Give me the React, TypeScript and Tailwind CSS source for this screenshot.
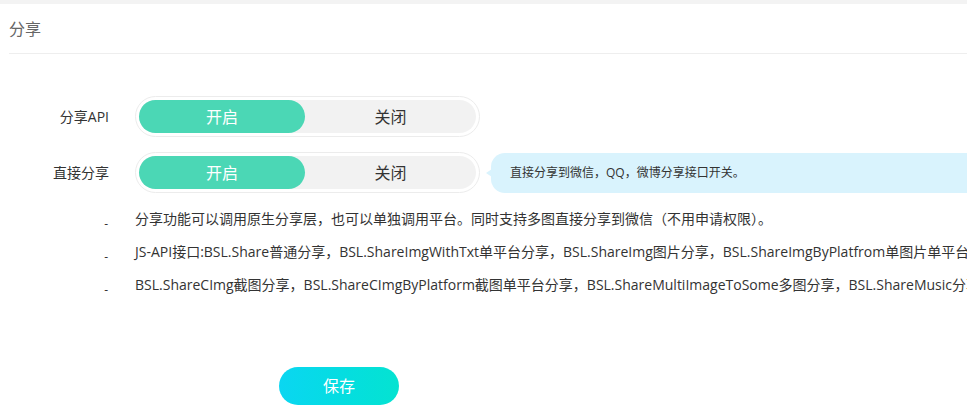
import React from "react";

const font = "font-['Open_Sans','Noto_Sans_CJK_SC',sans-serif]";

function Toggle() {
  return (
    <div className="w-[345px] h-[41px] rounded-full border border-[#ececec] bg-white p-[3px]">
      <div className="flex h-full w-full rounded-full bg-[#f2f2f2]">
        <div className="flex h-full w-[166px] items-center justify-center rounded-full bg-[#4bd7b5] text-[16px] text-white">
          开启
        </div>
        <div className="flex h-full flex-1 items-center justify-center text-[16px] text-[#333]">
          关闭
        </div>
      </div>
    </div>
  );
}

const lines = [
  "分享功能可以调用原生分享层，也可以单独调用平台。同时支持多图直接分享到微信（不用申请权限）。",
  "JS-API接口:BSL.Share普通分享，BSL.ShareImgWithTxt单平台分享，BSL.ShareImg图片分享，BSL.ShareImgByPlatfrom单图片单平台分享",
  "BSL.ShareCImg截图分享，BSL.ShareCImgByPlatform截图单平台分享，BSL.ShareMultiImageToSome多图分享，BSL.ShareMusic分享音乐",
];

export default function App() {
  return (
    <div className={`w-full h-[406px] overflow-hidden bg-white ${font}`}>
      <div className="h-[4px] bg-[#f3f3f3]" />
      <div className="pl-[9px]">
        <div className="h-[50px] flex items-center border-b border-[#eeeeee] text-[16px] text-[#666]">
          分享
        </div>
      </div>
      <div className="pt-[42px]">
        <div className="flex items-center">
          <div className="w-[109px] text-right text-[14px] text-[#333]">分享API</div>
          <div className="ml-[26px]">
            <Toggle />
          </div>
        </div>
        <div className="mt-[15px] flex items-center">
          <div className="w-[109px] text-right text-[14px] text-[#333]">直接分享</div>
          <div className="ml-[26px]">
            <Toggle />
          </div>
          <div className="relative ml-[11px] flex h-[40px] flex-1 items-center rounded-l-[14px] bg-[#d9f3fd] pl-[19px] text-[12px] text-[#333] whitespace-nowrap">
            <div className="absolute left-[-5px] top-[16px] h-0 w-0 border-y-[4px] border-r-[6px] border-y-transparent border-r-[#d9f3fd]" />
            直接分享到微信，QQ，微博分享接口开关。
          </div>
        </div>
        <div className="mt-[9px]">
          {lines.map((t, i) => (
            <div key={i} className="flex h-[33px]">
              <div className="w-[109px] shrink-0 text-right pr-[1px] pt-[16px] text-[12px] leading-[12px] text-[#333]">
                -
              </div>
              <div className="ml-[26px] whitespace-nowrap text-[14px] leading-[33px] text-[#333]">{t}</div>
            </div>
          ))}
        </div>
        <div className="mt-[66px] pl-[279px]">
          <button className="h-[38px] w-[120px] rounded-full bg-gradient-to-r from-[#0bd6f1] to-[#05e3d1] text-[16px] text-white">
            保存
          </button>
        </div>
      </div>
    </div>
  );
}
